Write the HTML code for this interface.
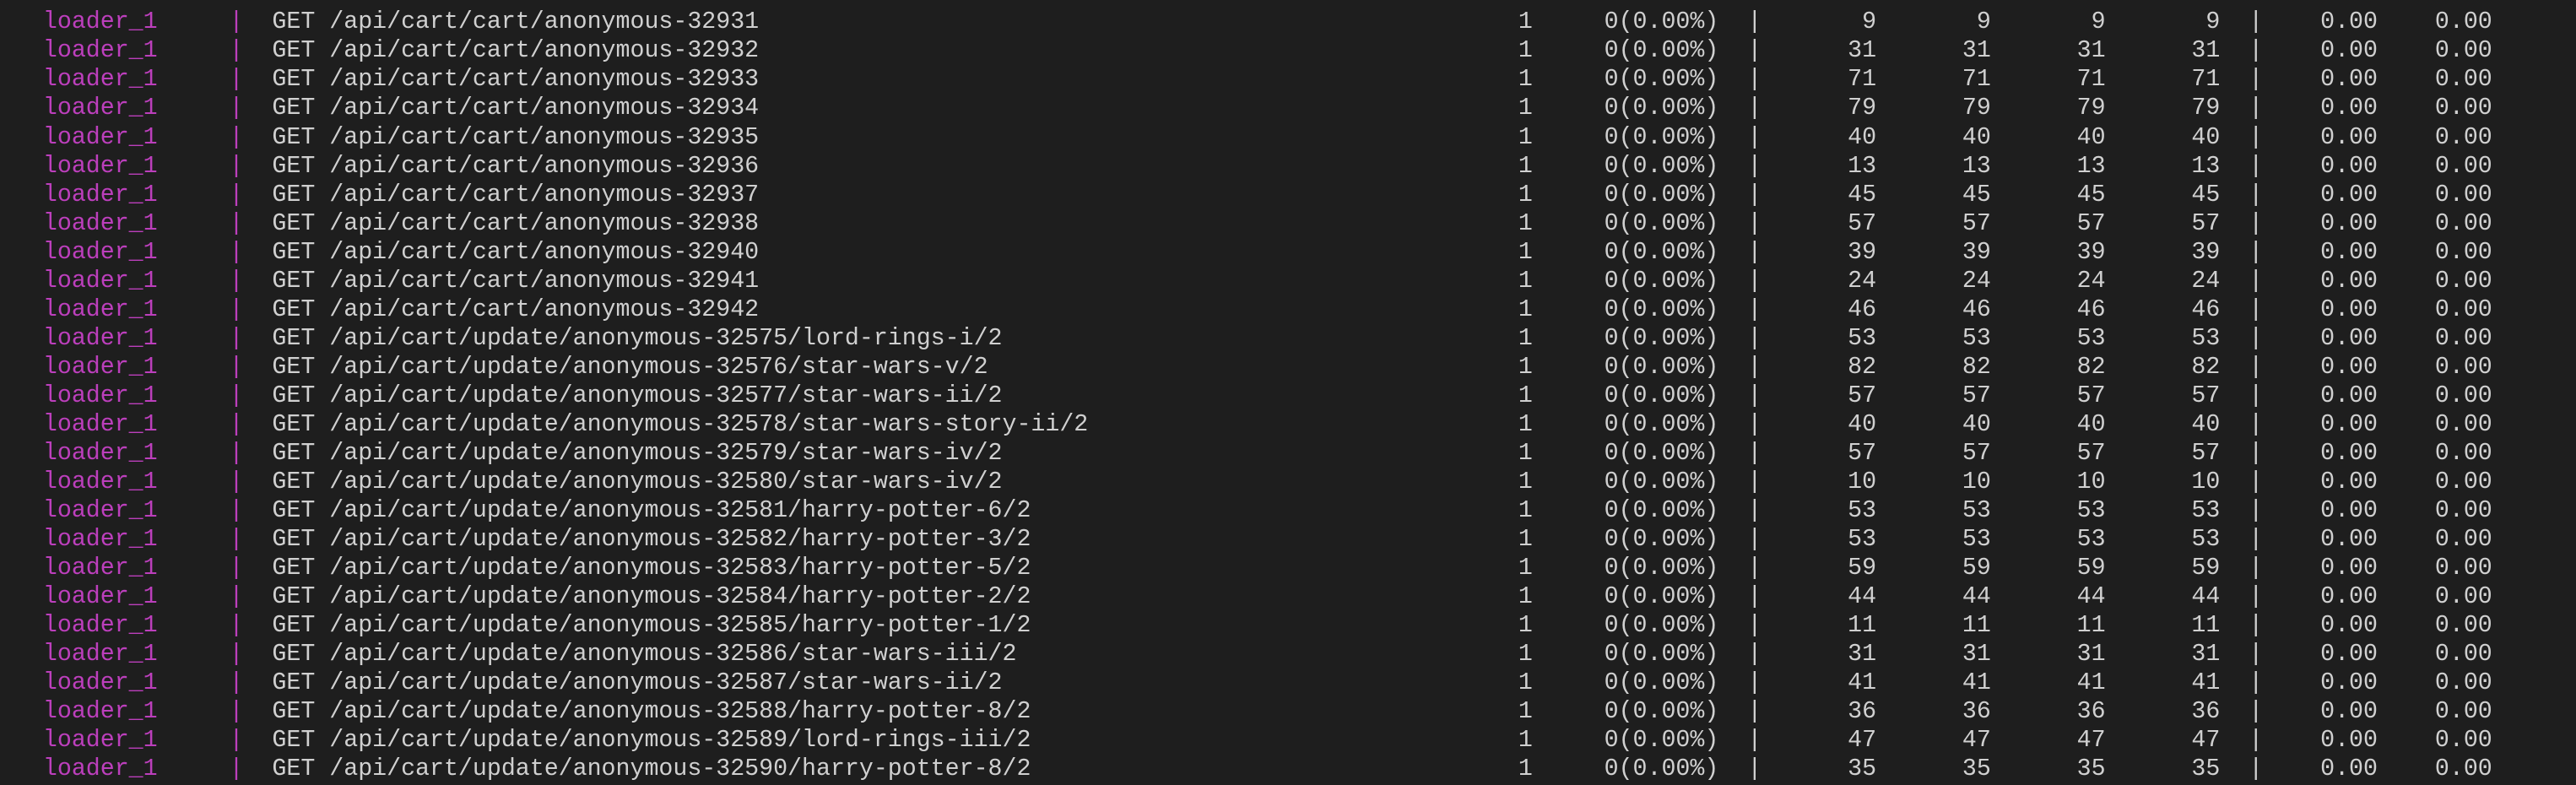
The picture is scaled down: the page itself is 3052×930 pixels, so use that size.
<!DOCTYPE html>
<html><head><meta charset="utf-8"><style>
html,body{margin:0;padding:0;background:#1e1e1e;width:3052px;height:930px;overflow:hidden}
body{font-family:"Liberation Mono",monospace;font-size:28.28px;color:#d0d0d0;--c:16.97px}
.w{position:absolute;top:9.4px;left:0}
.r{position:relative;height:34.04px;line-height:34.04px;width:3052px;white-space:pre}
.r span{position:absolute;top:0}
.l{left:calc(var(--c)*3);color:#bc3fbc}
.p1{left:calc(var(--c)*16);color:#bc3fbc}
.g{left:calc(var(--c)*19)}
.a{left:calc(var(--c)*106)}
.b{left:calc(var(--c)*112)}
.p2{left:calc(var(--c)*122)}
.n1,.n2,.n3,.n4{width:calc(var(--c)*4);text-align:right}
.n1{left:calc(var(--c)*127)}
.n2{left:calc(var(--c)*135)}
.n3{left:calc(var(--c)*143)}
.n4{left:calc(var(--c)*151)}
.p3{left:calc(var(--c)*157)}
.f1{left:calc(var(--c)*162)}
.f2{left:calc(var(--c)*170)}
</style></head><body><div class="w">
<div class="r"><span class="l">loader_1</span><span class="p1">|</span><span class="g">GET /api/cart/cart/anonymous-32931</span><span class="a">1</span><span class="b">0(0.00%)</span><span class="p2">|</span><span class="n1">9</span><span class="n2">9</span><span class="n3">9</span><span class="n4">9</span><span class="p3">|</span><span class="f1">0.00</span><span class="f2">0.00</span></div>
<div class="r"><span class="l">loader_1</span><span class="p1">|</span><span class="g">GET /api/cart/cart/anonymous-32932</span><span class="a">1</span><span class="b">0(0.00%)</span><span class="p2">|</span><span class="n1">31</span><span class="n2">31</span><span class="n3">31</span><span class="n4">31</span><span class="p3">|</span><span class="f1">0.00</span><span class="f2">0.00</span></div>
<div class="r"><span class="l">loader_1</span><span class="p1">|</span><span class="g">GET /api/cart/cart/anonymous-32933</span><span class="a">1</span><span class="b">0(0.00%)</span><span class="p2">|</span><span class="n1">71</span><span class="n2">71</span><span class="n3">71</span><span class="n4">71</span><span class="p3">|</span><span class="f1">0.00</span><span class="f2">0.00</span></div>
<div class="r"><span class="l">loader_1</span><span class="p1">|</span><span class="g">GET /api/cart/cart/anonymous-32934</span><span class="a">1</span><span class="b">0(0.00%)</span><span class="p2">|</span><span class="n1">79</span><span class="n2">79</span><span class="n3">79</span><span class="n4">79</span><span class="p3">|</span><span class="f1">0.00</span><span class="f2">0.00</span></div>
<div class="r"><span class="l">loader_1</span><span class="p1">|</span><span class="g">GET /api/cart/cart/anonymous-32935</span><span class="a">1</span><span class="b">0(0.00%)</span><span class="p2">|</span><span class="n1">40</span><span class="n2">40</span><span class="n3">40</span><span class="n4">40</span><span class="p3">|</span><span class="f1">0.00</span><span class="f2">0.00</span></div>
<div class="r"><span class="l">loader_1</span><span class="p1">|</span><span class="g">GET /api/cart/cart/anonymous-32936</span><span class="a">1</span><span class="b">0(0.00%)</span><span class="p2">|</span><span class="n1">13</span><span class="n2">13</span><span class="n3">13</span><span class="n4">13</span><span class="p3">|</span><span class="f1">0.00</span><span class="f2">0.00</span></div>
<div class="r"><span class="l">loader_1</span><span class="p1">|</span><span class="g">GET /api/cart/cart/anonymous-32937</span><span class="a">1</span><span class="b">0(0.00%)</span><span class="p2">|</span><span class="n1">45</span><span class="n2">45</span><span class="n3">45</span><span class="n4">45</span><span class="p3">|</span><span class="f1">0.00</span><span class="f2">0.00</span></div>
<div class="r"><span class="l">loader_1</span><span class="p1">|</span><span class="g">GET /api/cart/cart/anonymous-32938</span><span class="a">1</span><span class="b">0(0.00%)</span><span class="p2">|</span><span class="n1">57</span><span class="n2">57</span><span class="n3">57</span><span class="n4">57</span><span class="p3">|</span><span class="f1">0.00</span><span class="f2">0.00</span></div>
<div class="r"><span class="l">loader_1</span><span class="p1">|</span><span class="g">GET /api/cart/cart/anonymous-32940</span><span class="a">1</span><span class="b">0(0.00%)</span><span class="p2">|</span><span class="n1">39</span><span class="n2">39</span><span class="n3">39</span><span class="n4">39</span><span class="p3">|</span><span class="f1">0.00</span><span class="f2">0.00</span></div>
<div class="r"><span class="l">loader_1</span><span class="p1">|</span><span class="g">GET /api/cart/cart/anonymous-32941</span><span class="a">1</span><span class="b">0(0.00%)</span><span class="p2">|</span><span class="n1">24</span><span class="n2">24</span><span class="n3">24</span><span class="n4">24</span><span class="p3">|</span><span class="f1">0.00</span><span class="f2">0.00</span></div>
<div class="r"><span class="l">loader_1</span><span class="p1">|</span><span class="g">GET /api/cart/cart/anonymous-32942</span><span class="a">1</span><span class="b">0(0.00%)</span><span class="p2">|</span><span class="n1">46</span><span class="n2">46</span><span class="n3">46</span><span class="n4">46</span><span class="p3">|</span><span class="f1">0.00</span><span class="f2">0.00</span></div>
<div class="r"><span class="l">loader_1</span><span class="p1">|</span><span class="g">GET /api/cart/update/anonymous-32575/lord-rings-i/2</span><span class="a">1</span><span class="b">0(0.00%)</span><span class="p2">|</span><span class="n1">53</span><span class="n2">53</span><span class="n3">53</span><span class="n4">53</span><span class="p3">|</span><span class="f1">0.00</span><span class="f2">0.00</span></div>
<div class="r"><span class="l">loader_1</span><span class="p1">|</span><span class="g">GET /api/cart/update/anonymous-32576/star-wars-v/2</span><span class="a">1</span><span class="b">0(0.00%)</span><span class="p2">|</span><span class="n1">82</span><span class="n2">82</span><span class="n3">82</span><span class="n4">82</span><span class="p3">|</span><span class="f1">0.00</span><span class="f2">0.00</span></div>
<div class="r"><span class="l">loader_1</span><span class="p1">|</span><span class="g">GET /api/cart/update/anonymous-32577/star-wars-ii/2</span><span class="a">1</span><span class="b">0(0.00%)</span><span class="p2">|</span><span class="n1">57</span><span class="n2">57</span><span class="n3">57</span><span class="n4">57</span><span class="p3">|</span><span class="f1">0.00</span><span class="f2">0.00</span></div>
<div class="r"><span class="l">loader_1</span><span class="p1">|</span><span class="g">GET /api/cart/update/anonymous-32578/star-wars-story-ii/2</span><span class="a">1</span><span class="b">0(0.00%)</span><span class="p2">|</span><span class="n1">40</span><span class="n2">40</span><span class="n3">40</span><span class="n4">40</span><span class="p3">|</span><span class="f1">0.00</span><span class="f2">0.00</span></div>
<div class="r"><span class="l">loader_1</span><span class="p1">|</span><span class="g">GET /api/cart/update/anonymous-32579/star-wars-iv/2</span><span class="a">1</span><span class="b">0(0.00%)</span><span class="p2">|</span><span class="n1">57</span><span class="n2">57</span><span class="n3">57</span><span class="n4">57</span><span class="p3">|</span><span class="f1">0.00</span><span class="f2">0.00</span></div>
<div class="r"><span class="l">loader_1</span><span class="p1">|</span><span class="g">GET /api/cart/update/anonymous-32580/star-wars-iv/2</span><span class="a">1</span><span class="b">0(0.00%)</span><span class="p2">|</span><span class="n1">10</span><span class="n2">10</span><span class="n3">10</span><span class="n4">10</span><span class="p3">|</span><span class="f1">0.00</span><span class="f2">0.00</span></div>
<div class="r"><span class="l">loader_1</span><span class="p1">|</span><span class="g">GET /api/cart/update/anonymous-32581/harry-potter-6/2</span><span class="a">1</span><span class="b">0(0.00%)</span><span class="p2">|</span><span class="n1">53</span><span class="n2">53</span><span class="n3">53</span><span class="n4">53</span><span class="p3">|</span><span class="f1">0.00</span><span class="f2">0.00</span></div>
<div class="r"><span class="l">loader_1</span><span class="p1">|</span><span class="g">GET /api/cart/update/anonymous-32582/harry-potter-3/2</span><span class="a">1</span><span class="b">0(0.00%)</span><span class="p2">|</span><span class="n1">53</span><span class="n2">53</span><span class="n3">53</span><span class="n4">53</span><span class="p3">|</span><span class="f1">0.00</span><span class="f2">0.00</span></div>
<div class="r"><span class="l">loader_1</span><span class="p1">|</span><span class="g">GET /api/cart/update/anonymous-32583/harry-potter-5/2</span><span class="a">1</span><span class="b">0(0.00%)</span><span class="p2">|</span><span class="n1">59</span><span class="n2">59</span><span class="n3">59</span><span class="n4">59</span><span class="p3">|</span><span class="f1">0.00</span><span class="f2">0.00</span></div>
<div class="r"><span class="l">loader_1</span><span class="p1">|</span><span class="g">GET /api/cart/update/anonymous-32584/harry-potter-2/2</span><span class="a">1</span><span class="b">0(0.00%)</span><span class="p2">|</span><span class="n1">44</span><span class="n2">44</span><span class="n3">44</span><span class="n4">44</span><span class="p3">|</span><span class="f1">0.00</span><span class="f2">0.00</span></div>
<div class="r"><span class="l">loader_1</span><span class="p1">|</span><span class="g">GET /api/cart/update/anonymous-32585/harry-potter-1/2</span><span class="a">1</span><span class="b">0(0.00%)</span><span class="p2">|</span><span class="n1">11</span><span class="n2">11</span><span class="n3">11</span><span class="n4">11</span><span class="p3">|</span><span class="f1">0.00</span><span class="f2">0.00</span></div>
<div class="r"><span class="l">loader_1</span><span class="p1">|</span><span class="g">GET /api/cart/update/anonymous-32586/star-wars-iii/2</span><span class="a">1</span><span class="b">0(0.00%)</span><span class="p2">|</span><span class="n1">31</span><span class="n2">31</span><span class="n3">31</span><span class="n4">31</span><span class="p3">|</span><span class="f1">0.00</span><span class="f2">0.00</span></div>
<div class="r"><span class="l">loader_1</span><span class="p1">|</span><span class="g">GET /api/cart/update/anonymous-32587/star-wars-ii/2</span><span class="a">1</span><span class="b">0(0.00%)</span><span class="p2">|</span><span class="n1">41</span><span class="n2">41</span><span class="n3">41</span><span class="n4">41</span><span class="p3">|</span><span class="f1">0.00</span><span class="f2">0.00</span></div>
<div class="r"><span class="l">loader_1</span><span class="p1">|</span><span class="g">GET /api/cart/update/anonymous-32588/harry-potter-8/2</span><span class="a">1</span><span class="b">0(0.00%)</span><span class="p2">|</span><span class="n1">36</span><span class="n2">36</span><span class="n3">36</span><span class="n4">36</span><span class="p3">|</span><span class="f1">0.00</span><span class="f2">0.00</span></div>
<div class="r"><span class="l">loader_1</span><span class="p1">|</span><span class="g">GET /api/cart/update/anonymous-32589/lord-rings-iii/2</span><span class="a">1</span><span class="b">0(0.00%)</span><span class="p2">|</span><span class="n1">47</span><span class="n2">47</span><span class="n3">47</span><span class="n4">47</span><span class="p3">|</span><span class="f1">0.00</span><span class="f2">0.00</span></div>
<div class="r"><span class="l">loader_1</span><span class="p1">|</span><span class="g">GET /api/cart/update/anonymous-32590/harry-potter-8/2</span><span class="a">1</span><span class="b">0(0.00%)</span><span class="p2">|</span><span class="n1">35</span><span class="n2">35</span><span class="n3">35</span><span class="n4">35</span><span class="p3">|</span><span class="f1">0.00</span><span class="f2">0.00</span></div>
</div></body></html>
